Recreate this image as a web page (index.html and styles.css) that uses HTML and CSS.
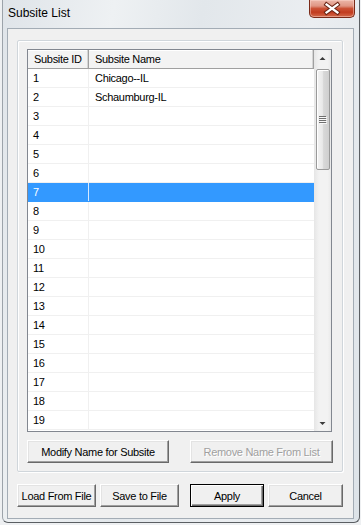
FILE: index.html
```html
<!DOCTYPE html>
<html>
<head>
<meta charset="utf-8">
<title>Subsite List</title>
<link rel="stylesheet" href="styles.css">
</head>
<body>
<div class="window">
  <div class="titlebar">
    <span class="title">Subsite List</span>
    <div class="close">
      <svg width="44" height="17" viewBox="0 0 44 17">
        <path d="M16.5 4.5 L27.5 12.5 M27.5 4.5 L16.5 12.5" stroke="#6a2414" stroke-width="4.2" stroke-linecap="square" fill="none"/>
        <path d="M16.5 4.5 L27.5 12.5 M27.5 4.5 L16.5 12.5" stroke="#ffffff" stroke-width="2.2" stroke-linecap="square" fill="none"/>
      </svg>
    </div>
  </div>
  <div class="client">
    <div class="group">
      <div class="list">
        <div class="list-main">
          <div class="header">
            <div class="hcol hid">Subsite ID</div>
            <div class="hcol hname">Subsite Name</div>
          </div>
          <div class="rows">
            <div class="row"><div class="cell cid">1</div><div class="cell cname">Chicago--IL</div></div>
            <div class="row"><div class="cell cid">2</div><div class="cell cname">Schaumburg-IL</div></div>
            <div class="row"><div class="cell cid">3</div><div class="cell cname"></div></div>
            <div class="row"><div class="cell cid">4</div><div class="cell cname"></div></div>
            <div class="row"><div class="cell cid">5</div><div class="cell cname"></div></div>
            <div class="row"><div class="cell cid">6</div><div class="cell cname"></div></div>
            <div class="row selected"><div class="cell cid">7</div><div class="cell cname"></div></div>
            <div class="row"><div class="cell cid">8</div><div class="cell cname"></div></div>
            <div class="row"><div class="cell cid">9</div><div class="cell cname"></div></div>
            <div class="row"><div class="cell cid">10</div><div class="cell cname"></div></div>
            <div class="row"><div class="cell cid">11</div><div class="cell cname"></div></div>
            <div class="row"><div class="cell cid">12</div><div class="cell cname"></div></div>
            <div class="row"><div class="cell cid">13</div><div class="cell cname"></div></div>
            <div class="row"><div class="cell cid">14</div><div class="cell cname"></div></div>
            <div class="row"><div class="cell cid">15</div><div class="cell cname"></div></div>
            <div class="row"><div class="cell cid">16</div><div class="cell cname"></div></div>
            <div class="row"><div class="cell cid">17</div><div class="cell cname"></div></div>
            <div class="row"><div class="cell cid">18</div><div class="cell cname"></div></div>
            <div class="row"><div class="cell cid">19</div><div class="cell cname"></div></div>
          </div>
        </div>
        <div class="vscroll">
          <div class="arrow">
            <svg width="17" height="17" viewBox="0 0 17 17"><polygon points="5.5,10 8.5,7 11.5,10" fill="#3c3c3c"/></svg>
          </div>
          <div class="track">
            <div class="thumb">
              <svg width="8" height="8" viewBox="0 0 8 8">
                <path d="M0 0.5 H7 M0 2.5 H7 M0 4.5 H7 M0 6.5 H7" stroke="#6f6f6f" stroke-width="1"/>
                <path d="M1 1.5 H8 M1 3.5 H8 M1 5.5 H8 M1 7.5 H8" stroke="#ffffff" stroke-width="1" opacity="0.8"/>
              </svg>
            </div>
          </div>
          <div class="arrow">
            <svg width="17" height="17" viewBox="0 0 17 17"><polygon points="5.5,8 8.5,11 11.5,8" fill="#3c3c3c"/></svg>
          </div>
        </div>
      </div>
      <div class="group-buttons">
        <button class="btn w-modify">Modify Name for Subsite</button>
        <button class="btn w-remove" disabled>Remove Name From List</button>
      </div>
    </div>
    <div class="footer">
      <button class="btn w-load">Load From File</button>
      <button class="btn w-save">Save to File</button>
      <button class="btn default w-apply">Apply</button>
      <button class="btn w-cancel">Cancel</button>
    </div>
  </div>
</div>
</body>
</html>
```

FILE: styles.css
```css
html, body {
  margin: 0;
  padding: 0;
  background: #eef0f2;
}

body {
  width: 361px;
  height: 525px;
  overflow: hidden;
  font-family: "Liberation Sans", Arial, sans-serif;
  font-size: 11px;
  letter-spacing: -0.3px;
  color: #000;
}

.window {
  margin-left: 2px;
  width: 358px;
  height: 523px;
  box-sizing: border-box;
  border: 1px solid #5b5f63;
  border-top: none;
  border-left-color: #9ca3aa;
  border-radius: 0 0 6px 6px;
  background: linear-gradient(100deg, #dfe4e9 0%, #eef1f3 25%, #e2e7eb 45%, #ebeef1 70%, #dde3e8 100%);
}

.titlebar {
  display: flex;
  align-items: flex-start;
  height: 28px;
}

.title {
  margin-left: 5px;
  margin-top: 5px;
  font-size: 12px;
  line-height: 16px;
  letter-spacing: 0;
  color: #000;
}

.close {
  margin-left: auto;
  margin-right: 4px;
  width: 44px;
  height: 17px;
  border: 1px solid #7a2a18;
  border-top: none;
  border-radius: 0 0 5px 5px;
  background: linear-gradient(#ecb7a9 0%, #e09684 35%, #cb5236 50%, #c23c1f 72%, #d46a4b 100%);
  box-shadow: inset 0 0 0 1px rgba(255, 220, 210, 0.45);
  display: flex;
}

.client {
  margin-left: 4px;
  width: 347px;
  height: 491px;
  box-sizing: border-box;
  border: 1px solid #a3acb5;
  background: #f0f0f0;
  padding: 11px 0 0 9px;
}

.group {
  width: 326px;
  height: 432px;
  box-sizing: border-box;
  border: 1px solid #d0d6db;
  border-radius: 2px;
  box-shadow: inset 1px 1px 0 #ffffff, 1px 1px 0 #ffffff;
  padding: 8px 0 0 9px;
}

.list {
  width: 305px;
  height: 383px;
  box-sizing: border-box;
  border: 1px solid #828790;
  background: #ffffff;
  display: flex;
  overflow: hidden;
}

.list-main {
  width: 286px;
  display: flex;
  flex-direction: column;
}

.header {
  display: flex;
  height: 19px;
  box-sizing: border-box;
  background: #f3f3f3;
  border-bottom: 1px solid #a0a0a0;
  box-shadow: inset 0 1px 0 #ffffff;
}

.hcol {
  box-sizing: border-box;
  line-height: 18px;
  border-right: 1px solid #a0a0a0;
  box-shadow: inset -1px 0 0 #d5d5d5;
  white-space: nowrap;
}

.hid {
  width: 61px;
  padding-left: 6px;
}

.hname {
  width: 225px;
  padding-left: 6px;
}

.rows {
  display: flex;
  flex-direction: column;
}

.row {
  display: flex;
  height: 19px;
  box-sizing: border-box;
  border-bottom: 1px solid #f0f0f0;
}

.cell {
  box-sizing: border-box;
  line-height: 18px;
  white-space: nowrap;
}

.cid {
  width: 61px;
  padding-left: 5px;
  border-right: 1px solid #f0f0f0;
}

.cname {
  width: 225px;
  padding-left: 6px;
}

.row.selected {
  background: #3399ff;
  color: #ffffff;
  border-bottom-color: #3399ff;
}

.row.selected .cid {
  border-right-color: #d6e9ff;
}

.vscroll {
  width: 17px;
  display: flex;
  flex-direction: column;
  background: linear-gradient(90deg, #e6e6e6 0%, #f2f2f2 30%, #f2f2f2 80%, #e9e9e9 100%);
}

.arrow {
  height: 17px;
  display: flex;
}

.track {
  flex: 1;
  padding-top: 2px;
}

.thumb {
  margin-left: 2px;
  width: 14px;
  height: 101px;
  box-sizing: border-box;
  border: 1px solid #9a9a9a;
  border-radius: 2px;
  background: linear-gradient(90deg, #f4f4f4 0%, #e9e9e9 45%, #d8d8d8 55%, #cfcfcf 100%);
  box-shadow: inset 1px 1px 0 #ffffff;
  display: flex;
  align-items: center;
  justify-content: center;
}

.group-buttons {
  display: flex;
  margin-top: 8px;
}

.footer {
  display: flex;
  margin-top: 12px;
}

.btn {
  height: 23px;
  box-sizing: border-box;
  padding: 0;
  margin: 0;
  font-family: "Liberation Sans", Arial, sans-serif;
  font-size: 11px;
  letter-spacing: -0.3px;
  color: #000;
  background: #f0f0f0;
  border: 1px solid;
  border-color: #ffffff #696969 #696969 #ffffff;
  box-shadow: inset -1px -1px 0 #a0a0a0, inset 1px 1px 0 #e3e3e3;
  border-radius: 0;
  white-space: nowrap;
}

.btn:disabled {
  color: #a0a0a0;
  text-shadow: 1px 1px 0 #ffffff;
}

.btn.default {
  border: 1px solid #000000;
  box-shadow: inset 1px 1px 0 #ffffff, inset -1px -1px 0 #696969, inset -2px -2px 0 #a0a0a0;
}

.w-modify { width: 142px; }
.w-remove { width: 143px; margin-left: 21px; }
.w-load { width: 79px; }
.w-save { width: 79px; margin-left: 4px; }
.w-apply { width: 74px; margin-left: 11px; }
.w-cancel { width: 75px; margin-left: 4px; }
```
